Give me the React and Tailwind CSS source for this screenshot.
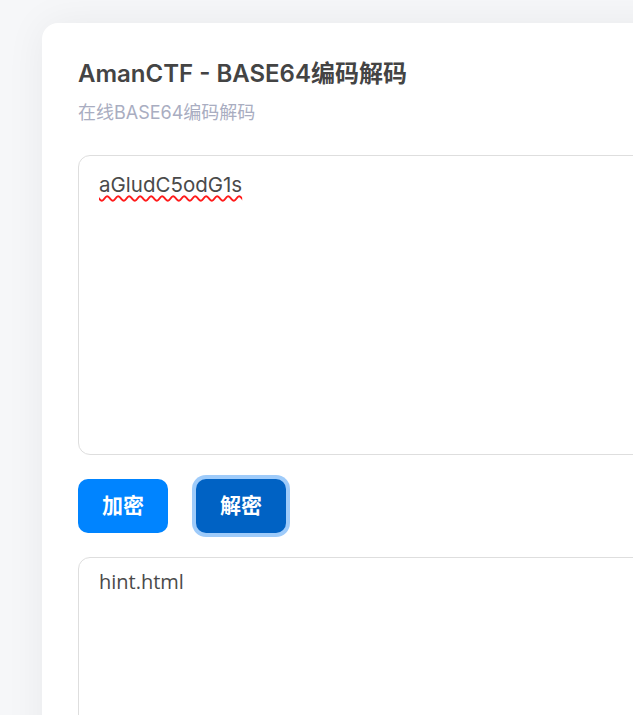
import React, { useState } from "react";

const FONT = {
  fontFamily: '"Inter", "Noto Sans CJK SC", sans-serif',
};

const App = () => {
  const [input, setInput] = useState("aGludC5odG1s");
  const [output, setOutput] = useState("hint.html");

  const encode = () => {
    try {
      setOutput(btoa(unescape(encodeURIComponent(input))));
    } catch (e) {
      setOutput("编码失败");
    }
  };

  const decode = () => {
    try {
      setOutput(decodeURIComponent(escape(atob(input))));
    } catch (e) {
      setOutput("解码失败");
    }
  };

  return (
    <div
      className="w-screen h-[715px] overflow-hidden bg-[#f6f7f9] pl-[42px] pt-[23px]"
      style={FONT}
    >
      <div className="w-[900px] min-h-[800px] bg-white rounded-2xl shadow-[0_0_40px_rgba(0,0,0,0.06)] px-9 pt-[36px]">
        {/* Header */}
        <h1 className="text-[24px] font-semibold text-[#444] leading-[30px]">
          AmanCTF - BASE64编码解码
        </h1>
        <p className="mt-[11px] text-[18px] text-[#a9adc1] leading-[26px]">
          在线BASE64编码解码
        </p>

        {/* Input */}
        <textarea
          className="mt-[29px] block w-full h-[300px] resize-none rounded-xl border border-[#dedede] px-5 pt-[14px] text-[20.5px] text-[#4a4a4a] outline-none underline decoration-wavy decoration-[#ff1a1a] decoration-[1.5px] underline-offset-[3px]"
          style={FONT}
          value={input}
          onChange={(e) => setInput(e.target.value)}
        />

        {/* Buttons */}
        <div className="mt-6 flex items-center gap-7">
          <button
            className="w-[90px] h-[54px] rounded-[10px] bg-[#0084ff] text-white text-[21px] font-bold"
            onClick={encode}
          >
            加密
          </button>
          <button
            className="w-[90px] h-[54px] rounded-[10px] bg-[#0062c4] text-white text-[21px] font-bold ring-4 ring-[#9ecbfa]"
            onClick={decode}
          >
            解密
          </button>
        </div>

        {/* Output */}
        <textarea
          className="mt-6 block w-full h-[300px] resize-none rounded-xl border border-[#dedede] px-5 pt-[9px] text-[20px] text-[#4a4a4a] outline-none"
          style={{ fontFamily: '"Open Sans", "Noto Sans CJK SC", sans-serif' }}
          value={output}
          readOnly
        />
      </div>
    </div>
  );
};

export default App;
